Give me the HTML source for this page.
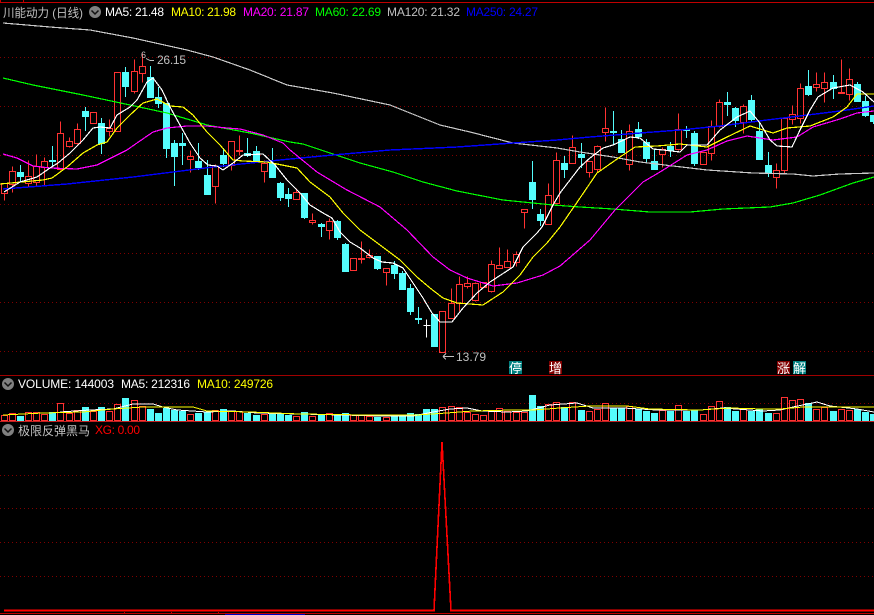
<!DOCTYPE html>
<html>
<head>
<meta charset="utf-8">
<style>
html,body{margin:0;padding:0;background:#000;width:874px;height:615px;overflow:hidden}
svg{position:absolute;left:0;top:0;display:block}
text{font-family:"Liberation Sans","WenQuanYi Zen Hei","Noto Sans CJK SC",sans-serif;font-size:12px}
</style>
</head>
<body>
<svg width="874" height="615" viewBox="0 0 874 615" xmlns="http://www.w3.org/2000/svg">
<rect width="874" height="615" fill="#000"/>

<!-- frame lines -->
<g shape-rendering="crispEdges">
<rect x="0" y="2" width="874" height="1" fill="#c00000"/>
<rect x="0" y="0" width="1" height="2" fill="#c00000"/>
<rect x="23" y="0" width="1" height="2" fill="#c00000"/>
<rect x="0" y="375" width="874" height="1" fill="#a00000"/>
<rect x="0" y="421" width="874" height="1" fill="#c02020"/>
<rect x="0" y="613" width="874" height="1" fill="#c00000"/>
<rect x="225" y="614" width="80" height="1" fill="#0000c0"/>
<rect x="124" y="612" width="1" height="1" fill="#c00000"/>
<rect x="171" y="612" width="1" height="1" fill="#c00000"/>
<rect x="218" y="612" width="1" height="1" fill="#c00000"/>
</g>

<!-- dotted grid -->
<g stroke="#800000" stroke-width="1" stroke-dasharray="1 3" shape-rendering="crispEdges">
<path d="M0 57.5H874M0 106.5H874M0 155.5H874M0 204.5H874M0 253.5H874M0 302.5H874M0 351.5H874M0 403.5H874M0 475.5H874M0 508.5H874M0 542.5H874M0 576.5H874"/>
</g>

<!-- cyan candles -->
<g shape-rendering="crispEdges">
<path transform="translate(.5,0)" fill="none" stroke="#54fcfc" stroke-width="1" d="M20 165V182M52 146V167M85 107V131M101 118V154M125 67V97M150 66V98M158 87V108M166 103V158M174 140V186M182 133V165M198 143V170M207 160V195M223 148V167M247 138V157M256 146V163M272 148V178M280 182V201M288 188V207M304 193V219M321 223V237M337 220V240M345 243V272M377 256V270M394 261V279M402 271V290M410 284V315M418 307V324M434 314V347M532 161V209M540 209V226M564 156V178M581 143V168M613 111V144M621 130V152M638 122V139M646 139V163M654 149V169M670 142V157M686 126V138M694 131V166M727 92V116M735 107V127M751 95V122M759 122V159M768 152V177M808 70V96M833 75V99M857 82V102M865 96V117M873 115V124"/>
<path fill="#54fcfc" d="M17 172h7v5h-7zM49 160h7v2h-7zM82 111h7v6h-7zM98 123h7v21h-7zM122 72h7v15h-7zM147 77h7v21h-7zM155 97h7v7h-7zM163 103h7v46h-7zM171 143h7v14h-7zM179 143h7v3h-7zM195 161h7v7h-7zM204 175h7v20h-7zM220 155h7v9h-7zM244 153h7v3h-7zM253 151h7v11h-7zM269 163h7v15h-7zM277 183h7v15h-7zM285 194h7v5h-7zM301 193h7v25h-7zM318 224h7v3h-7zM334 221h7v17h-7zM342 244h7v28h-7zM374 256h7v13h-7zM391 265h7v9h-7zM399 273h7v17h-7zM407 288h7v24h-7zM415 318h7v2h-7zM431 314h7v33h-7zM529 182h7v18h-7zM537 214h7v7h-7zM561 163h7v7h-7zM578 154h7v4h-7zM610 131h7v2h-7zM618 139h7v14h-7zM635 129h7v8h-7zM643 142h7v17h-7zM651 161h7v9h-7zM667 146h7v5h-7zM683 129h7v2h-7zM691 133h7v31h-7zM724 102h7v3h-7zM732 108h7v13h-7zM748 100h7v20h-7zM756 131h7v29h-7zM765 165h7v8h-7zM805 86h7v9h-7zM830 82h7v7h-7zM854 84h7v18h-7zM862 101h7v15h-7zM870 115h4v7h-4z"/>
<!-- white cross candle -->
<path transform="translate(.5,.5)" fill="none" stroke="#fff" stroke-width="1" d="M423 325h7M426 319V337"/>
</g>

<!-- red candles -->
<g transform="translate(.5,.5)" fill="none" stroke="#ff3232" stroke-width="1" shape-rendering="crispEdges">
<path d="M4 193V200M12 166V171M12 184V192M28 160V176M28 183V187M36 154V166M36 182V185M44 157V161M44 167V185M60 121V133M60 169V170M69 137V141M69 146V147M77 123V129M77 143V144M109 119V128M109 131V136M134 59V71M134 91V93M142 53V66M142 73V82M190 150V156M190 159V172M215 164V166M215 186V203M231 165V170M239 135V150M239 151V155M264 160V163M264 171V182M296 188V192M312 213V220M312 222V224M329 218V221M329 230V239M361 241V258M361 259V263M369 249V255M369 257V258M386 272V285M451 288V303M459 276V284M459 303V311M467 276V283M467 286V288M475 282V283M475 300V301M491 260V264M491 291V292M499 247V265M507 249V261M516 251V254M516 262V266M524 212V228M548 183V195M556 152V160M572 135V147M589 172V177M597 145V146M597 169V172M605 107V128M605 132V141M629 124V131M629 164V170M662 147V149M662 154V167M678 113V129M678 149V150M711 120V126M711 153V160M719 99V102M719 126V127M743 104V106M743 122V133M776 163V170M776 177V188M784 117V118M784 170V174M792 105V114M792 119V124M800 83V88M800 118V123M816 72V84M816 87V91M824 72V82M824 88V102M841 59V92M849 68V79M849 94V100"/>
<path d="M1 183h6v10h-6zM9 171h6v13h-6zM25 176h6v7h-6zM33 166h6v16h-6zM41 161h6v6h-6zM57 133h6v36h-6zM66 141h6v5h-6zM74 129h6v14h-6zM90 112h6v11h-6zM106 128h6v3h-6zM114 72h6v59h-6zM131 71h6v20h-6zM139 66h6v7h-6zM187 156h6v3h-6zM212 166h6v20h-6zM228 141h6v24h-6zM236 150h6v1h-6zM261 163h6v8h-6zM293 192h6v7h-6zM309 220h6v2h-6zM326 221h6v9h-6zM350 258h6v12h-6zM358 258h6v1h-6zM366 255h6v2h-6zM383 268h6v4h-6zM439 311h6v41h-6zM448 303h6v15h-6zM456 284h6v19h-6zM464 283h6v3h-6zM472 283h6v17h-6zM480 282h6v5h-6zM488 264h6v27h-6zM496 265h6v3h-6zM504 261h6v6h-6zM513 254h6v8h-6zM521 209h6v3h-6zM545 195h6v29h-6zM553 160h6v43h-6zM569 147h6v16h-6zM586 161h6v11h-6zM594 146h6v23h-6zM602 128h6v4h-6zM626 131h6v33h-6zM659 149h6v5h-6zM675 129h6v20h-6zM700 152h6v12h-6zM708 126h6v27h-6zM716 102h6v24h-6zM740 106h6v16h-6zM773 170h6v7h-6zM781 118h6v52h-6zM789 114h6v5h-6zM797 88h6v30h-6zM813 84h6v3h-6zM821 82h6v6h-6zM838 92h6v1h-6zM846 79h6v15h-6z"/>
</g>

<!-- main MA lines -->
<g fill="none" stroke-width="1" shape-rendering="crispEdges">
<polyline stroke="#c8c8c8" stroke-width="1.2" points="3,23 50,27 90,30 133,38 187,50 213,57 250,70 287,85 333,93 390,105 440,125 470,132 513,143 557,148 580,152 613,157 640,162 673,166 707,170 753,173 793,174 813,176 840,174 874,173"/>
<polyline stroke="#00ff00" stroke-width="1.2" points="3,78 33,85 83,95 130,105 167,113 207,125 250,133 290,142 303,144 333,154 360,163 393,172 423,182 457,191 503,200 553,205 580,207 613,209 650,212 690,212 723,209 770,207 793,203 820,195 853,183 874,177"/>
<polyline stroke="#0000ff" stroke-width="1.4" points="3,189 67,184 133,177 173,172 213,167 260,162 290,159 333,155 390,150 457,147 513,143 557,140 590,137 640,133 680,130 720,126 767,120 840,111 874,106"/>
<polyline stroke="#ff00ff" stroke-width="1.2" points="3,154 17,158 33,166 50,168 77,169 97,165 113,157 127,150 137,143 153,132 167,128 187,126 207,126 227,128 240,129 263,135 283,143 290,150 317,172 347,190 380,207 407,230 433,257 450,270 467,278 493,286 517,283 543,275 560,266 590,240 615,210 643,182 660,172 687,155 707,150 727,141 747,136 773,140 797,137 813,127 840,119 857,113 874,111"/>
<polyline stroke="#ffff00" stroke-width="1.2" points="0,184 43,180 52,178 67,167 83,153 97,145 107,142 117,128 130,115 143,103 157,99 170,106 183,107 193,115 207,132 220,145 233,160 243,161 267,162 297,168 310,182 330,197 343,213 360,230 380,245 400,260 417,277 430,288 443,298 457,303 483,305 503,292 520,275 533,257 547,243 560,227 580,198 597,173 620,157 635,147 657,146 680,144 707,147 727,137 750,126 773,133 787,128 810,126 833,117 847,107 857,94 874,94"/>
<polyline stroke="#ffffff" stroke-width="1.2" points="4,192 20,182 37,177 50,168 58,163 70,153 83,140 93,128 100,127 110,128 117,115 130,107 137,100 147,82 153,78 162,90 170,107 180,125 190,143 200,158 208,165 217,166 223,170 233,163 243,155 263,154 275,165 287,180 300,193 310,205 323,213 332,218 340,232 350,242 360,248 373,258 382,262 393,263 403,268 413,283 423,298 432,313 440,322 452,322 463,308 477,293 490,282 513,267 523,247 537,233 542,227 553,205 560,193 580,167 590,158 603,148 613,145 630,137 640,138 653,149 663,150 680,152 687,145 707,145 720,130 737,117 750,111 760,123 770,140 777,146 792,147 800,130 810,110 818,97 833,88 850,85 863,92 874,102"/>
</g>

<!-- volume bars -->
<g shape-rendering="crispEdges">
<path fill="#54fcfc" d="M17 416h7V421h-7zM49 412h7V421h-7zM82 407h7V421h-7zM98 407h7V421h-7zM122 398h7V421h-7zM147 409h7V421h-7zM155 413h7V421h-7zM163 408h7V421h-7zM171 410h7V421h-7zM179 411h7V421h-7zM195 413h7V421h-7zM204 412h7V421h-7zM220 409h7V421h-7zM244 413h7V421h-7zM253 415h7V421h-7zM269 413h7V421h-7zM277 414h7V421h-7zM285 415h7V421h-7zM301 412h7V421h-7zM318 415h7V421h-7zM334 415h7V421h-7zM342 413h7V421h-7zM374 417h7V421h-7zM391 416h7V421h-7zM399 416h7V421h-7zM407 413h7V421h-7zM415 414h7V421h-7zM423 409h7V421h-7zM431 409h7V421h-7zM529 395h7V421h-7zM537 406h7V421h-7zM561 407h7V421h-7zM578 410h7V421h-7zM610 408h7V421h-7zM618 408h7V421h-7zM635 409h7V421h-7zM643 411h7V421h-7zM651 413h7V421h-7zM667 411h7V421h-7zM683 411h7V421h-7zM691 410h7V421h-7zM724 407h7V421h-7zM732 411h7V421h-7zM748 411h7V421h-7zM756 409h7V421h-7zM765 413h7V421h-7zM805 403h7V421h-7zM830 411h7V421h-7zM854 409h7V421h-7zM862 412h7V421h-7zM870 414h4V421h-4z"/>
<path transform="translate(.5,.5)" fill="none" stroke="#ff3232" stroke-width="1" d="M1 415h6V420h-6zM9 413h6V420h-6zM25 412h6V420h-6zM33 412h6V420h-6zM41 414h6V420h-6zM57 403h6V420h-6zM66 413h6V420h-6zM74 410h6V420h-6zM90 411h6V420h-6zM106 411h6V420h-6zM114 404h6V420h-6zM131 400h6V420h-6zM139 406h6V420h-6zM187 414h6V420h-6zM212 410h6V420h-6zM228 411h6V420h-6zM236 411h6V420h-6zM261 414h6V420h-6zM293 416h6V420h-6zM309 416h6V420h-6zM326 413h6V420h-6zM350 415h6V420h-6zM358 415h6V420h-6zM366 416h6V420h-6zM383 417h6V420h-6zM439 407h6V420h-6zM448 406h6V420h-6zM456 407h6V420h-6zM464 412h6V420h-6zM472 414h6V420h-6zM480 415h6V420h-6zM488 411h6V420h-6zM496 408h6V420h-6zM504 411h6V420h-6zM513 412h6V420h-6zM521 412h6V420h-6zM545 404h6V420h-6zM553 402h6V420h-6zM569 402h6V420h-6zM586 411h6V420h-6zM594 409h6V420h-6zM602 403h6V420h-6zM626 406h6V420h-6zM659 410h6V420h-6zM675 405h6V420h-6zM700 414h6V420h-6zM708 406h6V420h-6zM716 401h6V420h-6zM740 409h6V420h-6zM773 413h6V420h-6zM781 397h6V420h-6zM789 400h6V420h-6zM797 399h6V420h-6zM813 409h6V420h-6zM821 407h6V420h-6zM838 409h6V420h-6zM846 410h6V420h-6z"/>
</g>

<!-- volume MA lines -->
<g fill="none" stroke-width="1" shape-rendering="crispEdges">
<polyline stroke="#ffffff" points="60,412 90,410 113,409 133,404 153,404 163,407 177,410 207,412 233,411 257,413 300,414 383,416 413,416 433,412 450,409 467,408 482,411 507,412 527,411 550,405 577,403 593,408 623,408 657,410 700,410 723,408 763,411 780,410 793,407 817,402 830,406 857,409 874,412"/>
<polyline stroke="#ffff00" points="3,415 43,413 83,412 113,409 143,407 193,407 207,411 250,412 300,414 367,415 417,415 447,413 473,411 513,410 533,410 560,408 590,406 627,406 650,409 700,410 730,408 763,409 780,409 803,407 837,407 874,407"/>
</g>

<!-- indicator line -->
<g fill="none" stroke="#ff0000" shape-rendering="crispEdges">
<path stroke-width="1.6" d="M4 610.5H434L442 442L451 610.5H874"/>
</g>

<!-- price labels -->
<g fill="#c0c0c0">
<text x="141" y="58" style="font-size:9px">6</text>
<path d="M146 58.5l4 2M150 60.5h4" stroke="#c0c0c0" fill="none" shape-rendering="crispEdges"/>
<text x="157" y="64" textLength="29" lengthAdjust="spacing">26.15</text>
<path d="M443 356.5h11M443 356.5l3-3M443 356.5l3 3" stroke="#c0c0c0" fill="none" shape-rendering="crispEdges"/>
<text x="456" y="361" textLength="30" lengthAdjust="spacing">13.79</text>
</g>

<!-- tag boxes -->
<g shape-rendering="crispEdges">
<rect x="509" y="361" width="13" height="13" fill="#008080"/>
<rect x="549" y="361" width="13" height="13" fill="#800000"/>
<rect x="777" y="361" width="13" height="13" fill="#800000"/>
<rect x="793" y="361" width="13" height="13" fill="#008080"/>
</g>
<g fill="#fff">
<text x="509" y="373" style="font-size:13px">停</text>
<text x="549" y="373" style="font-size:13px">增</text>
<text x="777" y="373" style="font-size:13px">涨</text>
<text x="793" y="373" style="font-size:13px">解</text>
</g>

<!-- header text -->
<text x="3" y="17" fill="#c0c0c0" textLength="80" lengthAdjust="spacingAndGlyphs">川能动力 (日线)</text>
<circle cx="95" cy="12" r="6" fill="#808080"/>
<path d="M91.5 10.5l3.5 3.5l3.5-3.5" fill="none" stroke="#111" stroke-width="1.5"/>
<text x="105" y="16" fill="#ffffff" textLength="59" lengthAdjust="spacing">MA5: 21.48</text>
<text x="171" y="16" fill="#ffff00" textLength="65" lengthAdjust="spacing">MA10: 21.98</text>
<text x="243" y="16" fill="#ff00ff" textLength="66" lengthAdjust="spacing">MA20: 21.87</text>
<text x="315" y="16" fill="#00ff00" textLength="66" lengthAdjust="spacing">MA60: 22.69</text>
<text x="387" y="16" fill="#c0c0c0" textLength="73" lengthAdjust="spacing">MA120: 21.32</text>
<text x="466" y="16" fill="#0000ff" textLength="72" lengthAdjust="spacing">MA250: 24.27</text>

<circle cx="8" cy="384" r="6" fill="#808080"/>
<path d="M4.5 382.5l3.5 3.5l3.5-3.5" fill="none" stroke="#111" stroke-width="1.5"/>
<text x="18" y="388" fill="#ffffff" textLength="96" lengthAdjust="spacing">VOLUME: 144003</text>
<text x="121" y="388" fill="#ffffff" textLength="69" lengthAdjust="spacing">MA5: 212316</text>
<text x="197" y="388" fill="#ffff00" textLength="76" lengthAdjust="spacing">MA10: 249726</text>

<circle cx="8" cy="430" r="6" fill="#808080"/>
<path d="M4.5 428.5l3.5 3.5l3.5-3.5" fill="none" stroke="#111" stroke-width="1.5"/>
<text x="18" y="435" fill="#c0c0c0" textLength="72" lengthAdjust="spacing">极限反弹黑马</text>
<text x="95" y="434" fill="#ff0000" textLength="45" lengthAdjust="spacing">XG: 0.00</text>
</svg>
</body>
</html>
